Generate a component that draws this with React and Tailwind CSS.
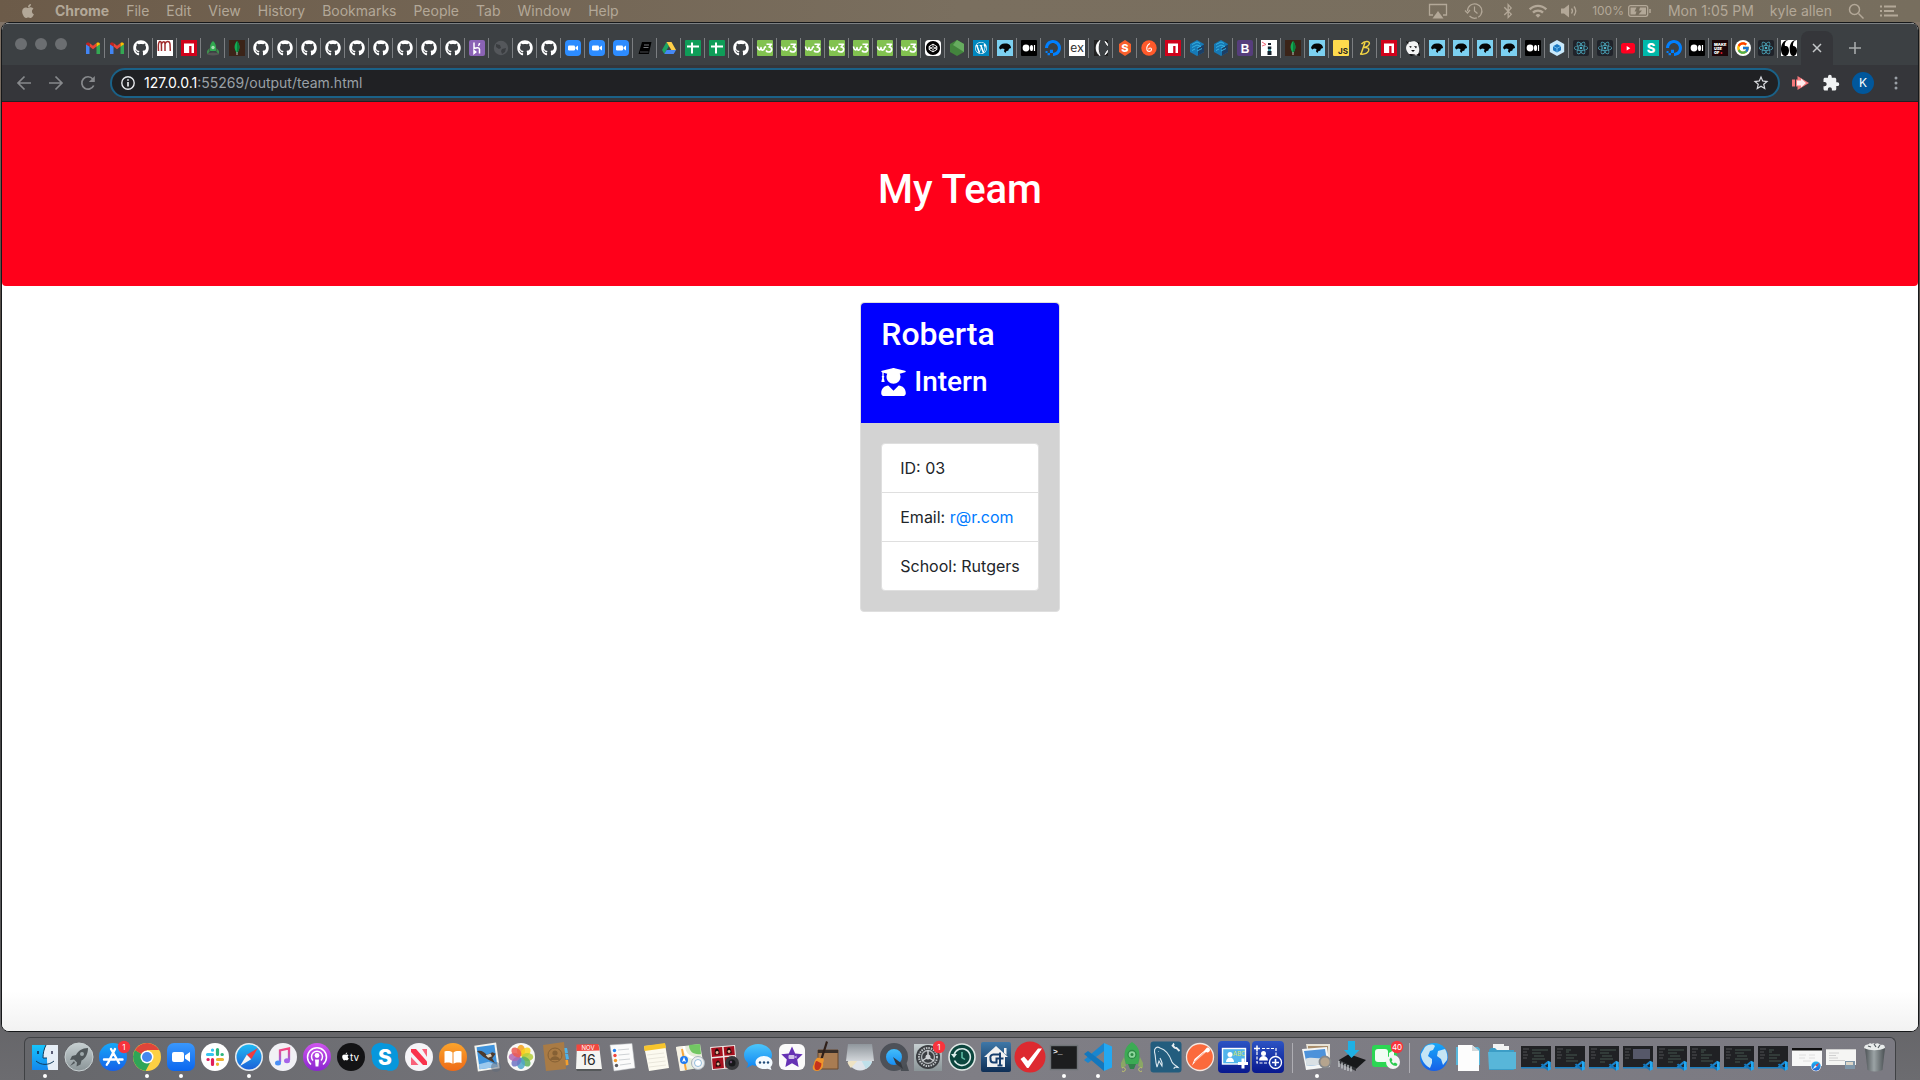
import React from "react";
import { SiWordpress, SiDigitalocean, SiReact, SiCodepen } from "react-icons/si";
import { FaGithub, FaApple, FaUserGraduate, FaBluetoothB } from "react-icons/fa";
import { FcGoogle } from "react-icons/fc";
import { MdExtension, MdOutlineStarBorder, MdWifi } from "react-icons/md";

/* ---------- tab favicons (16 x 16) ---------- */

const Fav = ({ children, bg, r = 0 }) => (
  <svg viewBox="0 0 16 16" className="size-4 overflow-visible">
    {bg && <rect width="16" height="16" rx={r} fill={bg} />}
    {children}
  </svg>
);

const favicons = {
  gmail: () => (
    <Fav>
      <path d="M1 14V4l3.5 2.5V14z" fill="#4285f4" />
      <path d="M11.5 14V6.500L15 4v10z" fill="#34a853" />
      <path d="M4.500 6.500V3L8 5.800 11.500 3v3.600L8 9.300z" fill="#ea4335" />
      <path d="M1 4.500C1 2.500 3 2 4.500 3v3.700L1 4.300z" fill="#c5221f" />
      <path d="M15 4.500C15 2.500 13 2 11.500 3v3.700L15 4.300z" fill="#fbbc04" />
    </Fav>
  ),
  github: () => <FaGithub className="size-4 text-white" />,
  script: () => (
    <Fav bg="#fff">
      <path d="M1.500 11C1 5 1.500 2 2.800 1.500 4.500 1 4.500 4 4.500 11M4.500 4C5.500 1 8 1 8 4v7M8 4c1-3.200 4.500-3.500 5 0l.3 7" fill="none" stroke="#a02c2c" strokeWidth="1.500" />
    </Fav>
  ),
  npm: () => (
    <Fav bg="#d0021b">
      <path d="M3 3.500h10V13h-2.500V6H8.200v7H3z" fill="#fff" />
    </Fav>
  ),
  rocket: () => (
    <Fav>
      <ellipse cx="8" cy="14" rx="6" ry="1.500" fill="#555" />
      <path d="M8 1c3 2.500 3.500 6 2.800 10H5.200C4.500 7 5 3.500 8 1z" fill="#2fa84f" />
      <path d="M4.500 8L2 11v3l2.500-2zM11.500 8l2.500 3v3l-2.500-2z" fill="#3e8f4d" />
      <circle cx="8" cy="7.500" r="1.700" fill="#a5dcb0" />
    </Fav>
  ),
  mongo: () => (
    <Fav bg="#3b2418">
      <path d="M8 1c3 3.500 3.500 8 0 12-3.500-4-3-8.500 0-12z" fill="#13aa52" />
      <path d="M8 1c3 3.500 3.500 8 0 12z" fill="#0b7d3b" />
      <path d="M8 12v3" stroke="#b8c4b8" />
    </Fav>
  ),
  heroku: () => (
    <Fav bg="#8b63b5" r={2}>
      <path d="M5 2.500v6c3-1.200 5.500-1.200 5.500.8v4.200M5 10.500v3l1.800-1.500zM10.500 3c0 1-.5 2-1.200 2.700" fill="none" stroke="#fff" strokeWidth="1.500" />
    </Fav>
  ),
  globe: () => (
    <Fav>
      <circle cx="8" cy="8" r="7.200" fill="#54575b" />
      <path d="M3 4l4 1 1 3-2 1-3-2zM9 9l4-1-1 4-3 2-1-3z" fill="#3a3d40" />
    </Fav>
  ),
  zoom: () => (
    <Fav bg="#2d8cff" r={4}>
      <rect x="3" y="5.500" width="7" height="5" rx="1.200" fill="#fff" />
      <path d="M10.500 7.300L13 5.600v4.800l-2.500-1.700z" fill="#fff" />
    </Fav>
  ),
  book: () => (
    <Fav>
      <path d="M5 2h9.500l-2.700 12H1.500z" fill="#000" />
      <path d="M7 5h5M6.500 7.500h5" stroke="#74777a" />
      <path d="M3 12h8.500" stroke="#4a4d50" />
    </Fav>
  ),
  drive: () => (
    <Fav>
      <path d="M5.500 2L1 10l2.300 4L8 6z" fill="#1da362" />
      <path d="M5.500 2h5L15 10h-4.700z" fill="#ffcf48" />
      <path d="M3.300 14L5.600 10H15l-2.300 4z" fill="#4688f4" />
    </Fav>
  ),
  sheets: () => (
    <Fav bg="#0f9d58" r={1}>
      <path d="M7 2.500v11M2 6.500h12" stroke="#fff" strokeWidth="2" />
    </Fav>
  ),
  w3: () => (
    <Fav bg="#82c250" r={1}>
      <path d="M.5 6.500C1 10.500 3.500 11 4 7.500 4 11 7 11 7.500 7.500L9 6.500M9.500 4.200h5L12 7c4 .2 3.200 5-.3 5-1.200 0-2.200-.6-2.700-1.500" fill="none" stroke="#fff" strokeWidth="1.600" strokeLinejoin="round" />
    </Fav>
  ),
  codepen: () => <span className="flex size-4 items-center justify-center rounded-sm bg-white"><SiCodepen className="size-3.5 text-black" /></span>,
  node: () => (
    <Fav>
      <path d="M8 0l7 4v8l-7 4-7-4V4z" fill="#43853d" />
      <path d="M8 0l7 4v8L4 5z" fill="#66ac5f" />
    </Fav>
  ),
  wordpress: () => <span className="flex size-4 items-center justify-center bg-[#0087be]"><SiWordpress className="size-3 text-white" /></span>,
  bird: () => (
    <Fav bg="#7cd0f0">
      <path d="M2 8c.500-3 3-4.800 6.500-4.500 3.500 0 5.500 2 5.500 4.500l-2 .8-.8 2-1.700.2L8.500 13 7 11.500 7.500 9 5 8.500 3.500 9.500z" fill="#060606" />
    </Fav>
  ),
  medium: () => (
    <Fav bg="#000" r={1}>
      <circle cx="5" cy="8" r="3.400" fill="#fff" />
      <ellipse cx="10.500" cy="8" rx="1.600" ry="3.100" fill="#fff" />
      <path d="M13.500 5v6" stroke="#fff" strokeWidth="1.200" />
    </Fav>
  ),
  ocean: () => <SiDigitalocean className="size-4 text-[#0080ff]" />,
  express: () => (
    <Fav bg="#fff">
      <text x="8" y="11.500" fontSize="13" textAnchor="middle" fill="#333" fontFamily="Lato, sans-serif">ex</text>
    </Fav>
  ),
  curve: () => (
    <Fav>
      <path d="M1 0h5C1 5 1 11 6 16H1zM15 0h-3v3h3zM15 16h-3v-3h3z" fill="#222" />
      <path d="M7 .5C2 4 2 12 7 15.500 4.500 11 4.500 5 7 .5zM12 1.500c2 1 2.500 2.500 2.500 4zM12 14.500c2-1 2.500-2.500 2.500-4z" fill="#fff" stroke="#fff" />
    </Fav>
  ),
  dollar: () => (
    <Fav>
      <path d="M8 0l6 4v8l-6 4-6-4V4z" fill="#f9602c" />
      <text x="8" y="12" fontSize="11" fontWeight="800" textAnchor="middle" fill="#fff" fontFamily="Inter, sans-serif">S</text>
    </Fav>
  ),
  swirl: () => (
    <Fav>
      <circle cx="8" cy="8" r="7.700" fill="#ff5a2b" />
      <path d="M9 3.500C6 5 5.500 8 6 10c.6 2 4.500 1.800 4.500-.6C10.500 7.500 8 7.500 7.500 9.300" fill="none" stroke="#fff" strokeWidth="1.100" />
    </Fav>
  ),
  sequelize: () => (
    <Fav>
      <path d="M8 0l7 4v8l-7 4-7-4V4z" fill="#1679b5" />
      <path d="M9 8l6-3.500V12l-6 3.500z" fill="#1c3f66" />
      <path d="M3 4.500L8 2l3 1.500M3 7.500L8 5l4 1.500M8 8l4-2M3 10.500l3-1.500M8 11l5-2.500" stroke="#35b0e0" fill="none" />
    </Fav>
  ),
  bootstrap: () => (
    <Fav bg="#563d7c" r={2}>
      <text x="8" y="12.500" fontSize="12" fontWeight="700" textAnchor="middle" fill="#fff" fontFamily="Liberation Sans, sans-serif">B</text>
    </Fav>
  ),
  lighthouse: () => (
    <Fav bg="#fff">
      <path d="M7 3h3v2H7zM6.800 6.500h3.500V9H6.800zM6.500 11h4v4h-4z" fill="#14202b" />
      <path d="M7 9h3v2H7z" fill="#4aa3a8" />
      <path d="M1 2l4 2.500L1 6" fill="none" stroke="#f1697a" />
    </Fav>
  ),
  js: () => (
    <Fav bg="#ffdb4d" r={1}>
      <text x="15" y="14" fontSize="8" fontWeight="700" textAnchor="end" fill="#222" fontFamily="Inter, sans-serif">JS</text>
    </Fav>
  ),
  bee: () => (
    <Fav>
      <path d="M4 14L8 2.500M4.500 4C8 0 14 1 12 4.500 11 6.500 8 7.500 7 7.500c4-.5 5.500 1 4.500 3.500-1 2-4.500 3.500-8.500 3" fill="none" stroke="#f3d544" strokeWidth="1.500" />
    </Fav>
  ),
  panda: () => (
    <Fav>
      <path d="M2 1l3 1c3-1.500 6-1 7.500 1L15 3l-1.500 3c1.500 4 .5 7-1.500 9.500L4 14C1 11 0 7 2.500 4z" fill="#f4f4f4" />
      <path d="M1 1.500l3-.5-1 3.500zM12.500 2L15 3l-1.300 3zM4 6.500l2.500-.5-.5 2zM9 6l3 .500-1 2zM6 10h4l-2 2zM11 15l4-2v3zM4 14l7 .500L6 16z" fill="#0c0c0c" />
    </Fav>
  ),
  webpack: () => (
    <Fav>
      <path d="M8 0l7.200 4v8L8 16 .8 12V4z" fill="#c9e9fb" />
      <path d="M8 4l4 2.200v4L8 12.500l-4-2.300v-4z" fill="#1c78c0" />
      <path d="M4 6.200L8 8.300l4-2.100M8 8.300v4" stroke="#8ed6fb" strokeWidth=".7" fill="none" />
    </Fav>
  ),
  react: () => <span className="flex size-4 items-center justify-center rounded-xs bg-[#20232a]"><SiReact className="size-3.5 text-[#4fb3c9]" /></span>,
  youtube: () => (
    <Fav>
      <rect x="1" y="3" width="14" height="10.500" rx="2.500" fill="#ff0020" />
      <path d="M6.700 6v4.500L10.300 8.200z" fill="#fff" />
    </Fav>
  ),
  steal: () => (
    <Fav bg="#00b8a9">
      <text x="8" y="13" fontSize="13" fontWeight="800" textAnchor="middle" fill="#fff" fontFamily="Inter, sans-serif">S</text>
    </Fav>
  ),
  makeuseof: () => (
    <Fav bg="#1c0508">
      <g fill="#fff" fontSize="4" fontWeight="900" fontFamily="Inter, sans-serif">
        <text x="2" y="6">MAKE</text>
        <text x="2" y="10">USE</text>
        <text x="2" y="14">OF</text>
      </g>
      <circle cx="9.500" cy="13" r="1" fill="#e01e2b" />
    </Fav>
  ),
  google: () => <span className="flex size-4 items-center justify-center rounded-full bg-white"><FcGoogle className="size-3.5" /></span>,
  quotes: () => (
    <Fav bg="#fff">
      <path d="M7.500 0C4 1 3.500 4 4 6c2.500-.5 4 1.500 4 4.500S6.500 16 4 16 0 13 0 9 2 0 7.500 0zM15.800 0C12 1 11.800 4 12.200 6c2 0 3.800 1.500 3.800 4.500S14.500 16 12.200 16 8.700 13 8.700 9 10 0 15.800 0z" fill="#000" />
    </Fav>
  ),
};

const rep = (name, n) => Array(n).fill(name);
const wideTabs = [
  "gmail", "gmail", "github", "script", "npm", "rocket", "mongo", ...rep("github", 9), "heroku", "globe",
  "github", "github", ...rep("zoom", 3), "book", "drive", "sheets", "sheets", "github", ...rep("w3", 7),
  "codepen", "node", "wordpress", "bird", "medium", "ocean", "express", "curve", "dollar", "swirl", "npm",
  "sequelize", "sequelize", "bootstrap", "lighthouse", "mongo", "bird", "js", "bee", "npm", "panda",
  ...rep("bird", 4), "medium", "webpack", "react", "react",
];
const narrowTabs = ["youtube", "steal", "ocean", "medium", "makeuseof", "google", "react", "quotes"];

function Tab({ name, width, last }) {
  const Icon = favicons[name];
  return (
    <button aria-label={name} className={`${width} flex h-5 shrink-0 items-center justify-center border-r ${last ? "border-transparent" : "border-[#7b7e81]"}`}>
      <Icon />
    </button>
  );
}

/* ---------- dock icons (32 x 32) ---------- */

const D = ({ children }) => <svg viewBox="0 0 32 32" className="size-8 shrink-0 overflow-visible">{children}</svg>;
const Disc = ({ fill, stroke = "none", sw = 1 }) => <circle cx="16" cy="16" r="14" fill={fill} stroke={stroke} strokeWidth={sw} />;
const Grad = ({ id, a, b }) => (
  <linearGradient id={id} x1="0" y1="0" x2="0" y2="1"><stop offset="0" stopColor={a} /><stop offset="1" stopColor={b} /></linearGradient>
);
const Bubble = ({ x = 27, y = 6, t }) => (
  <g>
    <circle cx={x} cy={y} r="6.200" fill="#f7343c" />
    <text x={x} y={y + 3} fontSize="8" textAnchor="middle" fill="#fff" fontFamily="Inter, sans-serif">{t}</text>
  </g>
);
const Code = ({ x = 0, y = 0, s = 1 }) => (
  <g transform={`translate(${x} ${y}) scale(${s})`}>
    <path d="M22 2l8 3.500v21L22 30z" fill="#23a8f2" />
    <path d="M22 2v8L6 22l-4-3z" fill="#1a86cf" />
    <path d="M22 30v-8L6 10l-4 3z" fill="#1377bd" />
  </g>
);
const Compass = ({ cx = 16, cy = 16, s = 1 }) => (
  <g transform={`translate(${cx} ${cy}) scale(${s})`}>
    <circle r="14" fill="#e9edf0" />
    <circle r="12.500" fill="url(#safari)" />
    <path d="M9-9L2.200 2.200-2.200-2.200z" fill="#f03a3f" />
    <path d="M-9 9L-2.200-2.200 2.200 2.200z" fill="#f4f4f4" />
  </g>
);
const CodeWindow = ({ v = 0 }) => (
  <D>
    <rect x="1" y="5" width="30" height="22" fill="#202124" />
    <rect x="1" y="26" width="30" height="1.500" fill="#1c7fc0" />
    <path d="M3 8h6M3 11h4M3 14h5M3 17h4" stroke="#5a5d60" strokeWidth=".8" />
    {v === 3
      ? <rect x="11" y="8" width="17" height="10" fill="#565869" />
      : <path d={v % 2 ? "M12 9h5M12 11h3M12 14h11M12 17h8M12 20h12" : "M12 9h16M12 12h9M14 15h10M12 18h13M12 21h5"} stroke="#4a5c55" strokeWidth=".9" />}
    <Code x={20} y={19} s={0.36} />
  </D>
);

const petals = ["#f6a11a", "#f8d51c", "#b5cf3a", "#5fb05b", "#4fa6c9", "#6f74c4", "#b066b0", "#ec5b52"];

const dockMain = [
  { n: "Finder", dot: true, el: <D><rect x="3" y="4" width="26" height="25" fill="#e6eef6" /><path d="M3 4h14c-2 4-3 8-3 13h4c0 4 .3 8 1.300 12H3z" fill="url(#finder)" /><path d="M9 10v3M23 10v3" stroke="#113" strokeWidth="1.300" /><path d="M7 20c5 4.500 13 4.500 18 0M17 4c-2 4-3 8-3 13h4" fill="none" stroke="#123c5c" strokeWidth="1" /></D> },
  { n: "Launchpad", el: <D><Disc fill="url(#silver)" stroke="#c8d0d2" /><path d="M25 7c-6 0-10 3-12 7l-4 1-2 4 4-.5 3 3-.5 4 4-2 1-4c4-2 6.500-6.500 6.500-12.500z" fill="#50575a" /><circle cx="19" cy="13" r="2" fill="#9da8aa" /><path d="M11 20l-4 5 5-3z" fill="#50575a" /></D> },
  { n: "App Store", el: <D><Disc fill="url(#blue)" /><path d="M18 8l-7 14M14 8l8 14M7 18.500h11M22 18.500h3.500M10.500 22.500l-.7 1.300" stroke="#fff" strokeWidth="2.400" strokeLinecap="round" /><Bubble t="1" /></D> },
  { n: "Google Chrome", dot: true, el: <D><Disc fill="#fdd043" /><path d="M16 16L3.900 9A14 14 0 0 0 14.500 29.900L20 20z" fill="#2fa557" /><path d="M10 12.500L4 9A14 14 0 0 1 28.200 9H16z" fill="#e0453a" /><path d="M16 16L4 9h12z" fill="#e0453a" /><circle cx="16" cy="16" r="6.500" fill="#fff" /><circle cx="16" cy="16" r="5" fill="#4587f0" /></D> },
  { n: "zoom.us", dot: true, el: <D><rect x="2" y="2" width="28" height="28" rx="7" fill="url(#zoomg)" /><rect x="7" y="11" width="12" height="10" rx="2" fill="#fff" /><path d="M20 14.500l5-3.500v10l-5-3.500z" fill="#fff" /></D> },
  { n: "Slack", el: <D><Disc fill="#fff" /><g strokeWidth="3.200" strokeLinecap="round"><path d="M13.500 9v.2M8.500 13.500h5" stroke="#36c5f0" /><path d="M18.500 8.500v5M23 13.500h.3" stroke="#2eb67d" /><path d="M18.500 18.500h5M18.500 23v.3" stroke="#ecb22e" /><path d="M13.500 18.500v5M9 18.500h.2" stroke="#e01e5a" /></g></D> },
  { n: "Safari", dot: true, el: <D><Compass /></D> },
  { n: "Music", el: <D><Disc fill="#f1f1f5" /><path d="M13 21V9.500l9-2V19" fill="none" stroke="url(#music)" strokeWidth="2.300" /><ellipse cx="11" cy="22" rx="3" ry="2.500" fill="#4a8ff5" /><ellipse cx="20" cy="19.800" rx="3" ry="2.500" fill="#a663e8" /></D> },
  { n: "Podcasts", el: <D><Disc fill="url(#purple)" /><g fill="none" stroke="#fff" strokeWidth="1.500"><path d="M10 23.500a9.500 9.500 0 1 1 12 0" /><path d="M12 19.500a5.500 5.500 0 1 1 8 0" /></g><circle cx="16" cy="14.500" r="2.400" fill="#fff" /><path d="M14 18.500h4l-.6 7h-2.800z" fill="#fff" /></D> },
  { n: "TV", el: <D><Disc fill="#131315" /><FaApple x="6" y="11" size={9} color="#fff" /><text x="15" y="20" fontSize="10" fill="#fff" fontFamily="Inter, sans-serif">tv</text></D> },
  { n: "Skype", el: <D><path d="M10 2c2-.5 4 0 5 .5 9-.5 15 6 14 14 1.500 4 1 8-1.500 11-2.500 2.500-7 3-10 1.500C8 30 2 23 3 15 1 10 3 3 10 2z" fill="#0797dc" /><text x="16" y="23.500" fontSize="21" fontWeight="800" textAnchor="middle" fill="#fff" fontFamily="Inter, sans-serif">S</text></D> },
  { n: "News", el: <D><Disc fill="#f5f4f7" /><path d="M8 8h5l11 12.500V24h-4L8 11z" fill="#f9334c" /><path d="M19 8h5v8zM8 16l7.500 8H8z" fill="#f9627a" /></D> },
  { n: "Books", el: <D><Disc fill="url(#orange)" /><path d="M15.500 11.500c-2-1.600-5-1.800-8-1V22c3-.800 6-.500 8 .800zM16.500 11.500c2-1.600 5-1.800 8-1V22c-3-.800-6-.500-8 .800z" fill="#fff" /></D> },
  { n: "Mail", el: <D><g transform="rotate(-8 16 16)"><rect x="5" y="3" width="22" height="26" fill="#f3f3ee" /><rect x="7" y="5" width="18" height="22" fill="#3f93dc" /><path d="M7 9c4-1 7 2 9 5l6-2 3 2-4 4 2 5-6-4-5-4z" fill="#4c3a2d" /><path d="M15 14l5-1 1 3-4 1z" fill="#d8d2c4" /><path d="M7 22l10-1 8 4v2H7z" fill="#9cc9ee" /></g><circle cx="25" cy="26" r="5" fill="#5d6a7a" opacity=".5" /></D> },
  { n: "Photos", el: <D><Disc fill="#f8f8f6" />{petals.map((c, i) => <ellipse key={c} cx="16" cy="9.500" rx="4" ry="5.800" fill={c} opacity=".85" transform={`rotate(${i * 45} 16 16)`} />)}</D> },
  { n: "Contacts", el: <D><path d="M24 7h4l1 5-3 .5zM26 13h3l1 5-3 .5z" fill="#4fb3e8" /><path d="M26 19h3l.500 5-3 .5z" fill="#f3a02e" /><path d="M4 4l21-3 2 27-20 2z" fill="#a97b45" /><circle cx="16" cy="14" r="7" fill="none" stroke="#856034" /><circle cx="16" cy="12" r="2.600" fill="#856034" /><path d="M11 19c1-5 9-5 10 0z" fill="#856034" /></D> },
  { n: "Calendar", el: <D><path d="M5 4h22l3 24H4z" fill="#f5f5f2" /><path d="M4 28h26l-1 2H5z" fill="#55585a" /><path d="M4.500 3.500L26.500 3l1 6.500-23 .5z" fill="#f2473e" /><text x="16" y="8.800" fontSize="6" textAnchor="middle" fill="#fff" fontFamily="Inter, sans-serif">NOV</text><text x="16.500" y="23.500" fontSize="14" textAnchor="middle" fill="#2a2a2a" fontFamily="Inter, sans-serif">16</text></D> },
  { n: "Reminders", el: <D><path d="M4 4l22-1.500L29 27 8 30z" fill="#fbfbfb" stroke="#b9bcc0" strokeWidth=".5" /><g><circle cx="8.500" cy="9.500" r="1.700" fill="#2483f0" /><circle cx="9" cy="14.500" r="1.700" fill="#f2453c" /><circle cx="9.500" cy="19.500" r="1.700" fill="#f39b2a" /><circle cx="10.500" cy="24.500" r="1.700" fill="#5b5b60" /><path d="M12 9l11-1M12.500 14l11-1M13 19l11-1M14 24l11-1.500" stroke="#cfd2d5" /></g></D> },
  { n: "Notes", el: <D><path d="M4 5l21-2 4 24-20 3z" fill="#fcfaf0" /><path d="M4 5l21-3 1 5L4.500 10z" fill="#f7c52d" /><path d="M7 14l17-2M8 18l17-2M8.500 22l17-2M9 26l17-2" stroke="#dcd9cc" strokeWidth=".6" /></D> },
  { n: "Maps", el: <D><path d="M2 6l24-3 4 23-23 4z" fill="#e6edda" /><path d="M2 6l7-1 4 24-7 1z" fill="#f6f2e6" /><path d="M15 4c0 7 5 10 12 9l-1-10z" fill="#72c763" /><path d="M10 5c0 9 6 13 18 12" fill="none" stroke="#fff" strokeWidth="2.500" /><path d="M8 8l4 21" stroke="#f4a93f" strokeWidth="2" /><circle cx="10" cy="19" r="4" fill="#1f7cf2" /><path d="M10 16l2 5-2-1-2 1z" fill="#fff" /><circle cx="24" cy="22" r="6.500" fill="#eceff1" stroke="#a9b4bc" /><circle cx="24" cy="22" r="3.500" fill="#fff" stroke="#6aa3cf" strokeWidth=".7" /></D> },
  { n: "Photo Booth", el: <D><g transform="rotate(-5 15 16)"><rect x="3" y="5" width="25" height="23" fill="#efe6e4" /><path d="M4 6h11v9H4zM16.500 6H27v9H16.500zM4 16.500h11V27H4zM16.500 16.500H27V27H16.500z" fill="#a60f1d" /><path d="M7 13c0-8 5-8 5 0M19 13c0-8 5-8 5 0M7 25c0-8 5-8 5 0" fill="#210d0d" /><circle cx="9.500" cy="11" r="1.500" fill="#e8b598" /><circle cx="21.500" cy="11" r="1.500" fill="#e8b598" /><circle cx="9.500" cy="22.500" r="1.500" fill="#e8b598" /></g><circle cx="24" cy="22" r="7" fill="#37383b" /><circle cx="24" cy="22" r="3.500" fill="#17181a" /><circle cx="23" cy="21" r="1.200" fill="#6a4f6f" /></D> },
  { n: "Messages", el: <D><path d="M16 3c8 0 14 5 14 11s-6 11-14 11c-2 0-4-.3-5.500-1L4 27c2-2 2-3 2-5-2.500-2-4-5-4-8C2 8 8 3 16 3z" fill="url(#msg)" /><path d="M22 15c5 0 8.500 3 8.500 6.500 0 2-1 3.500-2 4.500l1 3-4-1.300c-6 1.500-12-1.500-12-6.200 0-3.500 3.500-6.500 8.500-6.500z" fill="#f4fafe" /><g fill="#204c7a"><circle cx="18" cy="21.500" r="1.200" /><circle cx="22" cy="21.500" r="1.200" /><circle cx="26" cy="21.500" r="1.200" /></g></D> },
  { n: "iMovie", el: <D><rect x="3" y="3" width="26" height="26" rx="6" fill="#fafafa" /><path d="M16 5.500l3.200 6.900 7.500.9-5.500 5.200 1.400 7.500-6.600-3.700L9.400 26l1.400-7.500-5.500-5.200 7.500-.9z" fill="#6532b4" /><rect x="12.500" y="14" width="6" height="4" rx="1" fill="#cfc1e8" /><path d="M18.500 16l2-1.500v3z" fill="#cfc1e8" /></D> },
  { n: "GarageBand", el: <D><path d="M8 9h20v19H8z" fill="#a97c52" stroke="#6b4a2e" /><path d="M8 9h20v3H8z" fill="#3a2f28" /><path d="M16 0l2 1-6 19-2-1z" fill="#30201a" /><path d="M7 17c2-1 3 1 5 0 2.500 0 2 3 1 5 1 4-2 8-6 8-5 0-5-4-3-7 0-2 1-4 3-6z" fill="#f0952a" /><path d="M6 20c2 0 4 2 5 2s0 6-3 7-5-3-2-9z" fill="#c5321d" /></D> },
  { n: "DVD Player", el: <D><circle cx="16" cy="17" r="12.500" fill="#dfe4ea" /><path d="M16 17l12 4c-1 3-3 5-6 7z" fill="#bfe0ea" /><path d="M16 17l-9 10c-2-2-3-4-3.500-6z" fill="#eee3c4" /><path d="M4 3h24l2 17H2z" fill="url(#drive)" /></D> },
  { n: "QuickTime Player", el: <D><path d="M21 21h7l3 9h-8z" fill="#4a4e54" /><circle cx="16" cy="16" r="11" fill="url(#msg)" stroke="#4d5158" strokeWidth="6" /><path d="M15 16l8 6 2 6-7-5z" fill="#35383d" /></D> },
  { n: "System Preferences", el: <D><rect x="2" y="3" width="28" height="27" fill="url(#silver)" /><circle cx="16" cy="16" r="12" fill="#3b3e42" /><circle cx="16" cy="16" r="9" fill="none" stroke="#bfc3c6" strokeWidth="2" strokeDasharray="1.500 1" /><circle cx="16" cy="16" r="6.500" fill="none" stroke="#aeb2b5" strokeWidth="1.400" /><circle cx="16" cy="16" r="2.500" fill="#ced1d4" /><path d="M16 16V9M16 16l-6 4M16 16l6 4" stroke="#ced1d4" strokeWidth="1.500" /><Bubble t="1" /></D> },
  { n: "Time Machine", el: <D><circle cx="16" cy="16" r="13" fill="#0c463e" stroke="#dfe7e5" strokeWidth="1.600" /><path d="M8.500 19.500a8.300 8.300 0 1 0-.5-5.500" fill="none" stroke="#dcecea" strokeWidth="1.600" /><path d="M5 13h6l-3 4z" fill="#dcecea" /><path d="M16 11v5.500l3 2" fill="none" stroke="#62c0a8" strokeWidth="1.500" /></D> },
  { n: "Home sharing", el: <D><rect x="1" y="1" width="30" height="30" rx="2" fill="url(#navy)" /><path d="M16 5l12 11h-3v10H7V16H4z" fill="#f1f1f1" /><path d="M24 7h2.500v7L24 12z" fill="#f1f1f1" /><path d="M19.500 13.500h-6a3 3 0 0 0-3 4v1a3 3 0 0 0 3 3h3v-4h7M20 11.500v13M17.500 24.500h5" fill="none" stroke="#173f6e" strokeWidth="2" /></D> },
  { n: "Checkmark", el: <D><circle cx="16" cy="16" r="15.500" fill="#dd2a30" /><path d="M6.500 18l3.500-2.500 4 4.500L24 7.500h4L14.500 27h-1.500z" fill="#fff" /></D> },
  { n: "Terminal", dot: true, el: <D><rect x="2.500" y="4.500" width="27" height="24" fill="#1c1d1e" stroke="#707478" strokeWidth="1.400" /><text x="5" y="12.500" fontSize="8" fontWeight="700" fill="#eee" fontFamily="Liberation Mono, monospace">&gt;_</text></D> },
  { n: "Visual Studio Code", dot: true, el: <D><Code /></D> },
  { n: "Robo 3T", el: <D><path d="M8 16l-3 6v5l5-2zM24 16l3 6v5l-5-2z" fill="#8aa765" /><path d="M16 1c8 5 9 13 6 22H10C7 14 8 6 16 1z" fill="#3cab54" /><path d="M12 23h8l-2 5h-4z" fill="#31814a" /><circle cx="16" cy="13.500" r="4" fill="#8ed69c" stroke="#2c8a45" strokeWidth="1.300" /><circle cx="16" cy="13.500" r="1.500" fill="#2c8a45" /><path d="M6 27a2 2 0 1 1 0 3M26 27a2 2 0 1 0 0 3" fill="none" stroke="#c2c66b" /></D> },
  { n: "MySQL Workbench", el: <D><rect x=".5" y=".5" width="31" height="31" rx="3" fill="#235d7e" /><path d="M7 26C5 20 6 16 4.500 11 4 7 7 5 10 7c7 2 10 8 12 14 1 2.500 4 3.500 6 5.500-3-.5-4-.5-4 1.500M7 26l2-6 3 5c1-4-1-5-2-8M8 10.500h.5" fill="none" stroke="#dbe8ef" strokeWidth="1.100" /><path d="M22 4l3 3M24 2.500c-2 2 0 5 2.500 4.500l3 3" stroke="#e9eef1" strokeWidth="1.800" fill="none" /></D> },
  { n: "Postman", el: <D><circle cx="16" cy="16" r="13.500" fill="#fb6a3c" stroke="#f3e6e0" strokeWidth="1.300" /><path d="M23 6.500a2.500 2.500 0 1 1-1 4.500L12 20l-4 4.500 2.500-6.500L20 10z" fill="#fff" /><path d="M10.500 21l9.500-9.500" stroke="#fb6a3c" strokeWidth=".8" /></D> },
  { n: "ID card", el: <D><rect width="32" height="32" rx="4" fill="url(#royal)" /><rect x="4.500" y="7.500" width="23" height="15.500" fill="#52b4ec" stroke="#fff" strokeWidth="1.400" /><circle cx="12" cy="13.500" r="2.500" fill="#fff" /><path d="M8 21c0-6 8-6 8 0z" fill="#fff" /><text x="15" y="14.500" fontSize="6" fill="#d7e66a" fontFamily="Inter, sans-serif">ABC</text><path d="M25 17.500v10M20 22.500h10" stroke="#fff" strokeWidth="3" /></D> },
  { n: "Add person", el: <D><rect width="32" height="32" rx="4" fill="url(#royal)" /><path d="M10 7.500h14v10M5 11v11h12" fill="none" stroke="#fff" strokeWidth="1.200" strokeDasharray="3 1.500" /><path d="M5 4.500v6M2 7.500h6" stroke="#fff" strokeWidth="1.500" /><circle cx="11.500" cy="12.500" r="2.500" fill="#fff" /><path d="M7 19.500c0-6 9-6 9 0z" fill="#fff" /><circle cx="23.500" cy="21.500" r="6" fill="#1635a4" stroke="#fff" strokeWidth="1.300" /><path d="M23.500 18v7M20 21.500h7" stroke="#fff" strokeWidth="1.600" /></D> },
];

const dockRecent = [
  { n: "Preview", dot: true, el: <D><path d="M5 3h24v18l-20 4z" fill="#e7e2d6" /><path d="M7 5h20v12H7z" fill="#a98d6a" /><path d="M1 8l25-2 3 20-24 3z" fill="#f4f6f6" /><path d="M3 10l21-2 2.500 15-20.500 2z" fill="#4d92da" /><path d="M4.500 18c6-3 12 1 21-2l1 7-21 2z" fill="#d9e0e4" /><circle cx="24" cy="21" r="5.500" fill="#b5a48e" stroke="#85888b" strokeWidth="1.800" /></D> },
  { n: "Installer", el: <D><path d="M4 19l10-6 17 6-10 9z" fill="#17181a" /><path d="M4 19v3l17 8v-3z" fill="#2e3033" /><path d="M4 20v6M7 21.500v6M10 23v6M13 24v6M16 25.500v5" stroke="#cfd3d5" strokeWidth="1.200" /><path d="M13 0h7v9h4.500L16.500 17 9 9h4z" fill="#1fb0e4" /></D> },
  { n: "FaceTime", el: <D><rect x="3" y="4" width="25" height="22" rx="3" fill="#2cd653" /><rect x="6" y="8" width="13" height="13" rx="3" fill="#f1fdf4" /><path d="M20 12l5-3v11l-5-3z" fill="#f1fdf4" /><circle cx="24" cy="21" r="7" fill="#f5f5f5" /><path d="M20.500 18c0 4 3 7 7 7l1-2-2.500-1.500-1.500 1-2-2 1-1.500L22 16.500z" fill="#2ccb50" /><Bubble x={28} t="40" /></D> },
];

const dockFiles = [
  { n: "Downloads globe", el: <D><Disc fill="url(#blue)" /><path d="M7 6c4-3 8-3 10-1l-2 4-3 1-2 5 4 3v4l-2 5C6 24 3 18 3 13zM20 10l7-2c2 3 3 8 2 11l-4 5-2-6-4-3z" fill="#c5e5f5" /></D> },
  { n: "Documents", el: <D><path d="M4 6h22l2 2v16H4z" fill="#58b7dc" /><path d="M6 4h14l7 6v20H6z" fill="#fdfdfd" /><path d="M20 4v6h7z" fill="#d4d8da" /></D> },
  { n: "Folder", el: <D><path d="M7 3h11v10H7zM17 5h6v8h-6z" fill="#f2f3f3" /><path d="M3 9l2-2h4l2 2h17v20H3z" fill="#3c9dc6" /><path d="M2 11h28v17H3z" fill="#58b6d9" /></D> },
  ...[0, 1, 2, 3, 4, 5, 6, 7].map((v) => ({ n: `Code window ${v + 1}`, el: <CodeWindow v={v} /> })),
  { n: "Safari window", el: <D><rect x="1" y="7" width="30" height="18" fill="#f7f7f7" /><rect x="1" y="7" width="30" height="2.500" fill="#101010" /><path d="M8 14h7M18 14h6M8 17h6M18 17h6M12 20h8" stroke="#dedede" /><Compass cx={25} cy={25} s={0.37} /></D> },
  { n: "Preview window", el: <D><rect x="1" y="8" width="30" height="16" fill="#f5f5f3" /><path d="M1 8.500h30" stroke="#cfcfcf" /><path d="M4 12h10M4 14.500h7M4 17h9M4 19.500h16" stroke="#c6c6c6" strokeWidth=".8" /><rect x="20" y="20" width="10" height="8" fill="#7f96a8" /><path d="M21 21h7v3h-7z" fill="#dcd6c8" /></D> },
  { n: "Trash", el: <D><path d="M6 7h20l-2.500 22q-7.500 3-15 0z" fill="url(#trash)" /><path d="M5 7c1-5 4-2 6-5 2 2 3-1 5 1 3-2 4 0 6 1 2-1 4 0 4 3-6 3-15 3-21 0z" fill="#e9ecec" /><path d="M9 5l3 1M15 3l2 3M21 4l-2 3" stroke="#545b60" strokeWidth="1.200" /></D> },
];

function DockItem({ item }) {
  return (
    <button aria-label={item.n} className="flex min-w-0 flex-1 flex-col items-center gap-px">
      {item.el}
      <span className={`size-1 rounded-full ${item.dot ? "bg-white" : "bg-transparent"}`} />
    </button>
  );
}

function Defs() {
  return (
    <svg className="absolute size-0" aria-hidden="true">
      <defs>
        <Grad id="finder" a="#17c4fb" b="#1487ee" />
        <Grad id="silver" a="#c6cfd1" b="#8a9497" />
        <Grad id="blue" a="#17a8f8" b="#1560e8" />
        <Grad id="zoomg" a="#3a97fb" b="#0b67ef" />
        <Grad id="safari" a="#1fb9f3" b="#1c61d8" />
        <Grad id="music" a="#f8467e" b="#8a6cf0" />
        <Grad id="purple" a="#cf55ee" b="#8a26cf" />
        <Grad id="orange" a="#fba42c" b="#ee6a17" />
        <Grad id="msg" a="#4cc6fb" b="#0e85f2" />
        <Grad id="drive" a="#8f969c" b="#d2d6da" />
        <Grad id="navy" a="#3f78a8" b="#0f2f56" />
        <Grad id="royal" a="#2c54c4" b="#08188e" />
        <linearGradient id="trash" x1="0" y1="0" x2="1" y2="0"><stop offset="0" stopColor="#4e5457" /><stop offset=".45" stopColor="#9ba3a5" /><stop offset="1" stopColor="#4a5053" /></linearGradient>
      </defs>
    </svg>
  );
}

/* ---------- page sections ---------- */

function MenuBar() {
  return (
    <header className="flex h-[22px] shrink-0 items-center justify-between bg-linear-to-r from-[#6c5b49] via-[#7a6f5f] to-[#776e5e] pr-[22px] pl-5 text-sm text-[#b3a898]">
      <nav className="flex items-center gap-[17px]">
        <button aria-label="Apple menu" className="mr-0.5"><FaApple className="size-4" /></button>
        <button className="font-bold">Chrome</button>
        {["File", "Edit", "View", "History", "Bookmarks", "People", "Tab", "Window", "Help"].map((m) => (
          <button key={m}>{m}</button>
        ))}
      </nav>
      <div className="flex items-center gap-4">
        <svg viewBox="0 0 20 18" className="h-[18px] w-5"><path d="M5 13H1.500V2.500h17V13H15" fill="none" stroke="currentColor" strokeWidth="1.300" /><path d="M10 9l5.500 7.500h-11z" fill="currentColor" /></svg>
        <svg viewBox="0 0 20 18" className="h-[18px] w-5" fill="none" stroke="currentColor" strokeWidth="1.200"><path d="M3.500 9a7.200 7.200 0 1 1 2 5" strokeDasharray="30 1.500" /><path d="M10.500 4.500V9l3 2.500M1 8.500l2.500 2.500L6 8" /></svg>
        <FaBluetoothB className="size-4" />
        <MdWifi className="-ml-1 size-5" />
        <svg viewBox="0 0 20 16" className="-ml-1 h-4 w-5"><path d="M1 5.500h3l5-4v13l-5-4H1z" fill="currentColor" /><path d="M11.500 5.500q2 2.500 0 5M14 3.500q3.500 4.500 0 9" fill="none" stroke="currentColor" strokeWidth="1.300" /></svg>
        <span className="-ml-1 flex items-center gap-1 text-xs">100%
          <svg viewBox="0 0 24 12" className="h-3 w-6"><rect x=".7" y=".7" width="19" height="10.600" rx="2" fill="none" stroke="currentColor" strokeWidth="1.300" /><path d="M2.500 2.500h6l-2 4h2L7.500 9.500h-5zM12 2.500l-1 3h3L10.500 9.500H18v-7z" fill="currentColor" /><path d="M22 4v4" stroke="currentColor" strokeWidth="1.500" /></svg>
        </span>
        <span>Mon 1:05 PM</span>
        <span>kyle allen</span>
        <button aria-label="Search"><svg viewBox="0 0 16 16" className="size-4" fill="none" stroke="currentColor" strokeWidth="1.500"><circle cx="6.500" cy="6.500" r="5" /><path d="M10.500 10.500l5 5" /></svg></button>
        <button aria-label="Notification center"><svg viewBox="0 0 18 14" className="h-3.5 w-[18px]" stroke="currentColor" strokeWidth="1.800"><path d="M0 2.500h2M4 2.500h12M0 7h2M4 7h10M0 11.500h2M4 11.500h14" /></svg></button>
      </div>
    </header>
  );
}

function TabStrip() {
  return (
    <div className="flex h-[41px] shrink-0 items-end bg-[#3c4043]">
      <div className="mb-[15px] flex gap-2 pl-[13px]">
        {["Close window", "Minimise", "Full screen"].map((l) => <button key={l} aria-label={l} className="size-3 rounded-full bg-[#6b6e71]" />)}
      </div>
      <div className="mb-[7px] ml-[14px] flex">
        {wideTabs.map((n, i) => <Tab key={i} name={n} width="w-6" />)}
        {narrowTabs.map((n, i) => <Tab key={i} name={n} width="w-[23px]" last={i === narrowTabs.length - 1} />)}
      </div>
      <button aria-label="Close tab" className="flex h-[34px] w-8 items-center justify-center rounded-t-lg bg-[#35363a]">
        <svg viewBox="0 0 10 10" className="size-2.5" stroke="#c4c7c9" strokeWidth="1.500"><path d="M1 1l8 8M9 1L1 9" /></svg>
      </button>
      <button aria-label="New tab" className="flex h-[34px] w-11 items-center justify-center">
        <svg viewBox="0 0 12 12" className="size-3" stroke="#a7aaac" strokeWidth="1.600"><path d="M6 0v12M0 6h12" /></svg>
      </button>
    </div>
  );
}

function Toolbar() {
  const nav = "flex size-4 items-center justify-center text-[#87898c]";
  return (
    <div className="flex h-[37px] shrink-0 items-center border-b border-[#202124] bg-[#35363a] pr-5 pl-[14px]">
      <div className="flex gap-4">
        <button aria-label="Back" className={nav}><svg viewBox="0 0 16 16" className="size-4" fill="none" stroke="currentColor" strokeWidth="1.700"><path d="M15 8H2M8.500 1.500L2 8l6.500 6.500" /></svg></button>
        <button aria-label="Forward" className={nav}><svg viewBox="0 0 16 16" className="size-4" fill="none" stroke="currentColor" strokeWidth="1.700"><path d="M1 8h13M7.500 1.500L14 8l-6.500 6.500" /></svg></button>
        <button aria-label="Reload" className={nav}><svg viewBox="0 0 16 16" className="size-4" fill="none" stroke="currentColor" strokeWidth="1.700"><path d="M13.700 10.500A6.200 6.200 0 1 1 12.800 4" /><path d="M14.800 1v6h-6z" fill="currentColor" stroke="none" /></svg></button>
      </div>
      <div className="ml-3.5 flex h-[30px] flex-1 items-center rounded-full border-2 border-[#1a6187] bg-[#202124] pr-2 pl-2">
        <svg viewBox="0 0 16 16" className="size-4" fill="none" stroke="#e8eaed" strokeWidth="1.400"><circle cx="8" cy="8" r="6.200" /><path d="M8 7v4.500M8 4.300v1.500" strokeWidth="1.700" /></svg>
        <div className="ml-2 flex-1 text-sm text-[#9aa0a6]"><span className="text-white">127.0.0.1</span>:55269/output/team.html</div>
        <button aria-label="Bookmark this page"><MdOutlineStarBorder className="size-[18px] text-[#dadce0]" /></button>
      </div>
      <div className="flex items-center pl-3">
        <svg viewBox="0 0 18 16" className="h-4 w-[18px]"><path d="M0 4.500h3v7H0zM4 4.500h3v7H4z" fill="#f5777a" /><path d="M5.500 1L17 8 5.500 15z" fill="#f5777a" /><path d="M5 5.500h4V3.500L14 8 9 12.500v-2H5z" fill="#fff" opacity=".85" /></svg>
        <MdExtension className="ml-3 size-[18px] text-[#f1f3f4]" />
        <button className="ml-3 flex size-[22px] items-center justify-center rounded-full bg-[#01579b] text-xs text-white">K</button>
        <button aria-label="More" className="ml-5"><svg viewBox="0 0 4 14" className="h-3.5 w-1" fill="#9aa0a6"><circle cx="2" cy="2" r="1.500" /><circle cx="2" cy="7" r="1.500" /><circle cx="2" cy="12" r="1.500" /></svg></button>
      </div>
    </div>
  );
}

function TeamPage() {
  return (
    <main className="flex-1 bg-white text-[#212529]">
      <div className="mb-4 rounded-b bg-[#ff001a] px-8 py-16">
        <h1 className="mb-2 text-center font-['Roboto',sans-serif] text-[40px] leading-12 font-medium text-white">My Team</h1>
      </div>
      <article className="mx-auto w-fit rounded border border-[#dfdfdf] bg-[#d3d3d3]">
        <div className="rounded-t bg-[#0000ff] px-5 pt-3 pb-3 font-['Roboto',sans-serif] text-white">
          <h2 className="mb-2 text-[32px] leading-[38px] font-medium">Roberta</h2>
          <h3 className="mb-2 flex items-center gap-2 text-[28px] leading-[42px] font-medium"><FaUserGraduate className="h-7 w-[25px]" />Intern</h3>
        </div>
        <div className="p-5">
          <ul className="divide-y divide-[#dfdfdf] rounded border border-[#dfdfdf] bg-white">
            <li className="px-[18px] py-3">ID: 03</li>
            <li className="px-[18px] py-3">Email: <a href="mailto:r@r.com" className="text-[#007bff]">r@r.com</a></li>
            <li className="px-[18px] py-3">School: Rutgers</li>
          </ul>
        </div>
      </article>
    </main>
  );
}

function Dock() {
  return (
    <footer className="mx-6 mt-[5px] flex h-[43px] shrink-0 items-start rounded-t-md border border-b-0 border-[#3f4144] bg-linear-to-r from-[#66676b] via-[#7f7e85] to-[#7b7a82] px-[3px] pt-[3px]">
      {dockMain.map((i) => <DockItem key={i.n} item={i} />)}
      <span className="mx-[7px] mt-0.5 h-[30px] w-px bg-[#aeadb3]" />
      {dockRecent.map((i) => <DockItem key={i.n} item={i} />)}
      <span className="mx-[7px] mt-0.5 h-[30px] w-px bg-[#aeadb3]" />
      {dockFiles.map((i) => <DockItem key={i.n} item={i} />)}
    </footer>
  );
}

export default function App() {
  return (
    <div className="flex h-screen flex-col overflow-hidden bg-linear-to-b from-[#85776a] via-[#33302f] to-[#6c6c70] font-['Inter',sans-serif]">
      <Defs />
      <MenuBar />
      <div className="mx-px flex min-h-0 flex-1 flex-col overflow-hidden rounded-lg border border-[#16181a] bg-white">
        <div className="flex min-h-0 flex-1 flex-col border-t border-[#7c8083]">
          <TabStrip />
          <Toolbar />
          <TeamPage />
          <div className="h-10 bg-linear-to-b from-white to-[#f2f2f2]" />
        </div>
      </div>
      <Dock />
    </div>
  );
}
